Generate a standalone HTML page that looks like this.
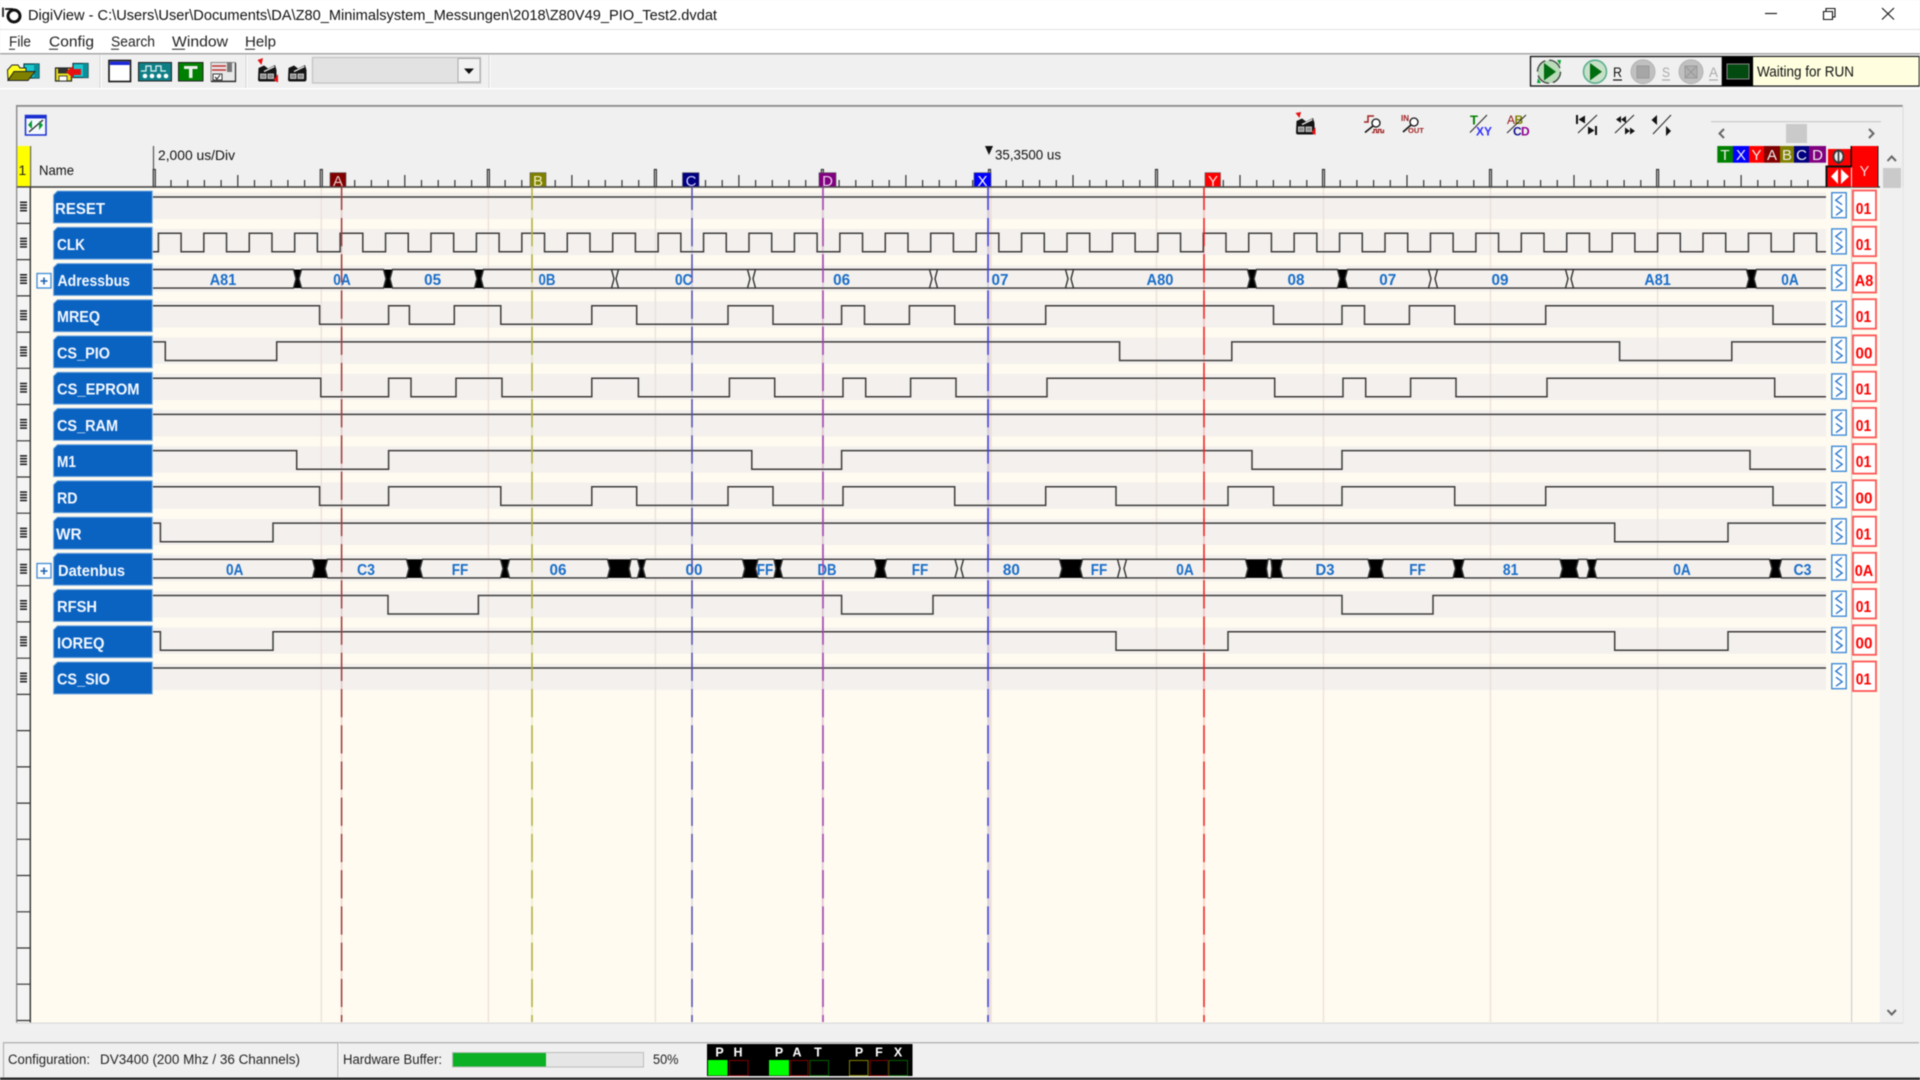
<!DOCTYPE html>
<html lang="de">
<head>
<meta charset="utf-8">
<title>DigiView</title>
<style>
html,body{margin:0;padding:0;width:1920px;height:1080px;overflow:hidden;background:#f0f0f0}
svg{display:block;filter:blur(.4px)}
text{font-family:"Liberation Sans",sans-serif;white-space:pre}
.t{font-size:14px;fill:#111}
.lb{font-size:15.5px;font-weight:bold;fill:#f4f8ff}
.bv{font-size:15.5px;font-weight:bold;fill:#1a6ec9;text-anchor:middle}
.val{font-size:15.5px;font-weight:bold;fill:#f00;text-anchor:middle}
.fl{font-size:15px;text-anchor:middle}
.w{fill:none;stroke:#3c3c3c;stroke-width:1.5}
.bus{fill:#f3f0ed;stroke:#333;stroke-width:1.4}
.st{font-size:12.5px;font-weight:bold;fill:#fff;text-anchor:middle}
</style>
</head>
<body>
<svg xmlns="http://www.w3.org/2000/svg" width="1920" height="1080" viewBox="0 0 1920 1080">
<defs>
<path id="lbl" d="M57.5 0H152.3V32H53.5V4Z" fill="#0b63c1" stroke="#7fb0e2" stroke-width="1"/>
<g id="chev"><rect x="1831.8" y="0" width="14.4" height="25" fill="#fff" stroke="#3f8bd8" stroke-width="1.4"/><path d="M1842 2.5L1835.8 7.5 1842 12M1836 13.5L1842.2 18 1836 22.5" fill="none" stroke="#2c78cc" stroke-width="1.4"/></g>
<rect id="vb" x="1853" y="0" width="23" height="29.5" fill="#fff" stroke="#ff5555" stroke-width="1.8"/>
<g id="hb" fill="#222"><rect x="20" y="-5.5" width="7" height="1.6"/><rect x="20" y="-2.7" width="7" height="1.6"/><rect x="20" y="0.1" width="7" height="1.6"/><rect x="20" y="2.9" width="7" height="1.6"/></g>
<g id="tk" fill="none" stroke="#333" stroke-width="1.2">
<path d="M16.7 187V180M33.4 187V180M50.1 187V180M66.8 187V180M83.5 187V175M100.2 187V180M116.9 187V180M133.6 187V180M150.3 187V180"/>
<rect x="-1" y="169.5" width="2" height="17.5" fill="#e8e8e8"/>
</g>
<g id="dev">
<path d="M1.5 6L7 3.5 11 6.5 18 3 19.5 8V17Q19.5 19.5 17.5 19.5H3Q1 19.5 1 17.5Z" fill="#141414"/>
<path d="M17.5 4.5L7 9.5" stroke="#e8e8e8" stroke-width="1.3"/>
<rect x="3.5" y="12" width="5.5" height="4.5" fill="#8c8c8c" stroke="#ddd" stroke-width=".8"/>
<rect x="11" y="12" width="5.5" height="4.5" fill="#8c8c8c" stroke="#ddd" stroke-width=".8"/>
</g>
</defs>

<!-- title bar -->
<rect width="1920" height="29" fill="#fff"/>
<rect y="29" width="1920" height="1" fill="#e2e2e2"/>
<path d="M3 7.5V17" stroke="#222" stroke-width="1.8"/>
<circle cx="14" cy="16" r="6" fill="#fff" stroke="#111" stroke-width="3"/>
<path d="M5 9H13" stroke="#111" stroke-width="1.8"/>
<text x="28" y="20" font-size="15" textLength="689" lengthAdjust="spacingAndGlyphs" fill="#111">DigiView - C:\Users\User\Documents\DA\Z80_Minimalsystem_Messungen\2018\Z80V49_PIO_Test2.dvdat</text>
<path d="M1765 13.5H1777" stroke="#111" stroke-width="1.1"/>
<path d="M1823.5 11.5H1832.5V19.5H1823.5ZM1826 11.5V8.5H1835V17H1832.5" fill="none" stroke="#111" stroke-width="1.1"/>
<path d="M1882 8L1894 19.5M1894 8L1882 19.5" stroke="#111" stroke-width="1.1"/>

<!-- menu -->
<rect y="30" width="1920" height="23" fill="#fff"/>
<g font-size="14.5" fill="#222">
<text x="9" y="46.5" textLength="22" lengthAdjust="spacingAndGlyphs">File</text>
<text x="49" y="46.5" textLength="45" lengthAdjust="spacingAndGlyphs">Config</text>
<text x="111" y="46.5" textLength="44" lengthAdjust="spacingAndGlyphs">Search</text>
<text x="172" y="46.5" textLength="56" lengthAdjust="spacingAndGlyphs">Window</text>
<text x="245" y="46.5" textLength="31" lengthAdjust="spacingAndGlyphs">Help</text>
</g>
<path d="M9 49.2H15M49 49.2H58M111 49.2H119M172 49.2H185M245 49.2H255" stroke="#222" stroke-width="1"/>

<!-- toolbar -->
<rect y="53" width="1920" height="1.6" fill="#a8a8a8"/>
<rect y="54.6" width="1920" height="33.4" fill="#f0f0f0"/>
<rect y="88" width="1920" height="1.4" fill="#fff"/>
<path d="M100 55V88M246 55V88M489 55V88" stroke="#d4d4d4" stroke-width="1"/>
<path d="M101 55V88M247 55V88M490 55V88" stroke="#fff" stroke-width="1"/>
<!-- open -->
<rect x="24" y="64" width="15" height="14" fill="#1cc6cf" stroke="#0a3a40" stroke-width="1.2"/>
<rect x="34" y="64" width="5" height="14" fill="#0b8f98"/>
<path d="M7.5 70L12 65H18L20 68H26V72H14L8 80Z" fill="#ffff20" stroke="#222" stroke-width="1"/>
<path d="M8 80.5L14 71.5H35L28 80.5Z" fill="#808000" stroke="#222" stroke-width="1"/>
<!-- save -->
<rect x="73" y="63.5" width="15" height="14" fill="#1cc6cf" stroke="#0a3a40" stroke-width="1.2"/>
<rect x="83" y="63.5" width="5" height="14" fill="#0b8f98"/>
<rect x="55.5" y="68" width="16" height="13" fill="#e8e020" stroke="#222" stroke-width="1.2"/>
<rect x="58" y="68.5" width="10" height="5" fill="#333"/>
<rect x="59" y="76" width="8" height="5" fill="#fff" stroke="#222" stroke-width=".8"/>
<path d="M66 72L73 66V69H81V75H73V78Z" fill="#e81010"/>
<!-- window -->
<rect x="109" y="60.5" width="21.5" height="21" fill="#fff" stroke="#111" stroke-width="1.6"/>
<rect x="110" y="61.5" width="19.5" height="3.5" fill="#1c28d8"/>
<!-- chip -->
<rect x="138.5" y="62.5" width="33" height="18.5" fill="#0f7f86" stroke="#222" stroke-width="1"/>
<path d="M141 71H146V66H151V71H156V66H161V71H166" fill="none" stroke="#e6f6f6" stroke-width="1.2"/>
<circle cx="145" cy="76" r="2.3" fill="#fff"/><circle cx="152" cy="76" r="2.3" fill="#fff"/><circle cx="159" cy="76" r="2.3" fill="#fff"/><circle cx="166" cy="76" r="2.3" fill="#fff"/>
<!-- T -->
<rect x="178.5" y="62.5" width="24.5" height="18.5" fill="#008000" stroke="#222" stroke-width="1"/>
<path d="M184 66H197.5V69H192.5V78H189V69H184Z" fill="#eee"/>
<!-- props -->
<rect x="211" y="62.5" width="24.5" height="18.5" fill="#e8e8e8" stroke="#888" stroke-width="1"/>
<path d="M212 66H226M212 70H226" stroke="#c03030" stroke-width="1.4"/>
<rect x="227" y="62" width="5" height="10" fill="#777"/>
<path d="M213 74H222V80H213Z" fill="#fff" stroke="#333"/>
<path d="M215 77L217 79 220 75" fill="none" stroke="#111"/>
<path d="M235.5 63V81.5H211" fill="none" stroke="#222" stroke-width="1.2"/>
<!-- devices -->
<use href="#dev" x="257" y="62"/>
<path d="M257.5 60L263 58 261.5 65ZM278 74L278 82.5 273.5 80Z" fill="#e81010"/>
<use href="#dev" x="287" y="62"/>
<!-- dropdown -->
<rect x="312.5" y="57.5" width="168" height="25.5" fill="#e2e2e2" stroke="#c8c8c8" stroke-width="1.5"/>
<rect x="458" y="58.5" width="22" height="23.5" fill="#f2f2f2" stroke="#aaa" stroke-width="1"/>
<path d="M464 68.5H474L469 74Z" fill="#111"/>

<!-- run panel -->
<rect x="1530.5" y="56.5" width="388.5" height="29.5" fill="#f0f0f0" stroke="#111" stroke-width="1.3"/>
<rect x="1721.7" y="57" width="31.5" height="29" fill="#000"/>
<rect x="1727" y="64" width="22" height="15" fill="#024a10" stroke="#888" stroke-width="1"/>
<rect x="1753.2" y="57" width="165.5" height="28.4" fill="#ffffe0"/>
<text x="1757" y="76.5" font-size="14.5" textLength="97" lengthAdjust="spacingAndGlyphs" fill="#111">Waiting for RUN</text>
<circle cx="1549" cy="71.7" r="11.5" fill="#b9dcb9" stroke="#444" stroke-width="1.4" stroke-dasharray="14 4"/>
<path d="M1544 63L1556 71.7 1544 80.5Z" fill="#006c10"/>
<path d="M1557 60L1561 60 1560 65ZM1541 83L1537 83 1538 78Z" fill="#00a030"/>
<circle cx="1595" cy="71.7" r="11.5" fill="#c8e0c8" stroke="#58b090" stroke-width="1.6"/>
<path d="M1590 63L1602 71.7 1590 80.5Z" fill="#006c10"/>
<text x="1613" y="77" font-size="14" textLength="9" lengthAdjust="spacingAndGlyphs" fill="#111">R</text>
<path d="M1613 80H1622" stroke="#111" stroke-width="1.2"/>
<circle cx="1643" cy="71.7" r="12" fill="#c0c0c0" stroke="#b4b4b4"/>
<rect x="1637" y="66" width="12" height="12" fill="#a6a6a6" stroke="#999"/>
<text x="1662" y="77" font-size="14" textLength="8" lengthAdjust="spacingAndGlyphs" fill="#aaa">S</text>
<path d="M1662 80H1670" stroke="#aaa" stroke-width="1.2"/>
<circle cx="1691" cy="71.7" r="12" fill="#c0c0c0" stroke="#b4b4b4"/>
<rect x="1685" y="66" width="12" height="12" fill="#b0b0b0" stroke="#999"/>
<path d="M1685 66L1697 78M1697 66L1685 78" stroke="#999" stroke-width="1.2"/>
<text x="1709" y="77" font-size="14" textLength="9" lengthAdjust="spacingAndGlyphs" fill="#aaa">A</text>
<path d="M1709 80H1718" stroke="#aaa" stroke-width="1.2"/>

<!-- panel frame -->
<rect x="16" y="105" width="1887" height="1.8" fill="#8a8a8a"/>
<rect x="1902.5" y="105" width="1" height="918" fill="#dcdcdc"/>
<rect x="16" y="106" width="1.4" height="917" fill="#8a8a8a"/>
<rect x="30.5" y="187" width="1849.5" height="835.5" fill="#fffbf0"/>
<rect x="16" y="1022.5" width="1887" height="1.2" fill="#dadada"/>

<!-- panel small icon -->
<rect x="25.5" y="115.5" width="20.5" height="19.5" fill="#f4f8ff" stroke="#1a2fd0" stroke-width="1.5"/>
<rect x="26" y="115.5" width="20" height="3" fill="#1a2fd0"/>
<path d="M29 132L43 120" stroke="#222" stroke-width="1.2"/>
<path d="M28 125L32 120V129ZM43 125L39 121V130Z" fill="#0a9a30"/>

<!-- header icons -->
<use href="#dev" x="1295" y="115"/>
<path d="M1295.5 113L1301 112 1299.5 118ZM1315.5 127L1315.5 135 1311.5 132.5Z" fill="#e81010"/>
<path d="M1364 122H1368V116H1374" fill="none" stroke="#a02020" stroke-width="1.5"/>
<circle cx="1376" cy="123" r="4" fill="#fff" stroke="#111" stroke-width="1.3"/>
<path d="M1373 126L1365 132.5" stroke="#111" stroke-width="1.6"/>
<path d="M1372 132.5H1374V129.5H1376.5V132.5H1378.5V129.5H1381V132.5H1383.5V129.5" fill="none" stroke="#a02020" stroke-width="1.2"/>
<text x="1401" y="121" font-size="8" font-weight="bold" fill="#a02020">IN</text>
<circle cx="1414" cy="122" r="4" fill="#fff" stroke="#111" stroke-width="1.3"/>
<path d="M1411 125L1403 132" stroke="#111" stroke-width="1.6"/>
<text x="1408" y="133" font-size="7.5" font-weight="bold" fill="#a02020">OUT</text>
<text x="1470" y="124.5" font-size="13" font-weight="bold" fill="#008000">T</text>
<path d="M1470 132.5L1487 115" stroke="#222" stroke-width="1"/>
<text x="1476" y="135.5" font-size="12" font-weight="bold" fill="#3030ff">XY</text>
<text x="1507" y="124" font-size="12" fill="#901818">A</text><text x="1514.5" y="124" font-size="12" font-weight="bold" fill="#808000">B</text>
<path d="M1507 133L1526 115" stroke="#222" stroke-width="1"/>
<text x="1513" y="135.5" font-size="12" font-weight="bold" fill="#101090">C</text><text x="1521" y="135.5" font-size="12" font-weight="bold" fill="#900090">D</text>
<g fill="#111">
<path d="M1576 115H1578V124H1576ZM1585 115.5V123.5L1578.5 119.5Z"/><path d="M1595 126H1597V135H1595ZM1588 126.5V134.5L1594.5 130.5Z"/>
<path d="M1621 116L1616 119.5 1621 123ZM1626 116L1621 119.5 1626 123ZM1625 127.5L1630 131 1625 134.5ZM1630 127.5L1635 131 1630 134.5Z"/>
<path d="M1657 115L1651.5 120 1657 125ZM1666 126L1671 131 1666 136Z"/>
</g>
<path d="M1578 133L1597 115M1615 133L1634 115M1653 134L1671 115" stroke="#222" stroke-width="1" fill="none"/>

<!-- horizontal scroller -->
<rect x="1711" y="121" width="170" height="1.4" fill="#cfcfcf"/>
<rect x="1786" y="124" width="21" height="19" fill="#cacaca"/>
<path d="M1724 129L1719.5 133.5 1724 138M1869 129L1873.5 133.5 1869 138" fill="none" stroke="#666" stroke-width="2"/>

<!-- header -->
<rect x="17.5" y="146" width="12.5" height="41" fill="#ffff00"/>
<text x="18.5" y="175" font-size="14" fill="#222">1</text>
<rect x="30" y="146" width="1.2" height="41" fill="#666"/>
<text x="39" y="175" class="t" textLength="35" lengthAdjust="spacingAndGlyphs">Name</text>
<path d="M153.5 146V187" stroke="#555" stroke-width="1.2"/>
<text x="158" y="160" class="t" textLength="77" lengthAdjust="spacingAndGlyphs">2,000 us/Div</text>
<path d="M985 146H993L989 155Z" fill="#111"/>
<text x="995" y="159.7" class="t" textLength="66" lengthAdjust="spacingAndGlyphs">35,3500 us</text>

<!-- ticks -->
<use href="#tk" x="154.3"/><use href="#tk" x="321.3"/><use href="#tk" x="488.4"/><use href="#tk" x="655.4"/><use href="#tk" x="822.4"/><use href="#tk" x="989.5"/><use href="#tk" x="1156.5"/><use href="#tk" x="1323.5"/><use href="#tk" x="1490.5"/><use href="#tk" x="1657.6"/>
<rect x="17" y="186.2" width="1863" height="1.6" fill="#444"/>

<!-- flags -->
<g>
<rect x="330" y="172.7" width="16" height="14" fill="#800000" stroke="#555" stroke-width=".6"/><text class="fl" x="338" y="186" fill="#e8c8c8">A</text>
<rect x="530" y="172.7" width="16" height="14" fill="#808000" stroke="#555" stroke-width=".6"/><text class="fl" x="538" y="186" fill="#f0f0c0">B</text>
<rect x="682.5" y="172.7" width="16.5" height="14" fill="#000080" stroke="#555" stroke-width=".6"/><text class="fl" x="691" y="186" fill="#d0d0ff">C</text>
<rect x="819" y="172.7" width="17" height="14" fill="#800080" stroke="#555" stroke-width=".6"/><text class="fl" x="827.5" y="186" fill="#eed0ee">D</text>
<rect x="974" y="172.7" width="17" height="14" fill="#0000ff" stroke="#555" stroke-width=".6"/><text class="fl" x="982.5" y="186" fill="#fff">X</text>
<rect x="1205" y="172.7" width="15.5" height="14" fill="#ff0000" stroke="#555" stroke-width=".6"/><text class="fl" x="1213" y="186" fill="#ffe0e0">Y</text>
</g>

<!-- letter buttons -->
<rect x="1717.3" y="146" width="15.7" height="16.7" fill="#008000"/>
<rect x="1733" y="146" width="16" height="16.7" fill="#0000ff"/>
<rect x="1749" y="146" width="15" height="16.7" fill="#ff0000"/>
<rect x="1764" y="146" width="16" height="16.7" fill="#800000"/>
<rect x="1780" y="146" width="14" height="16.7" fill="#808000"/>
<rect x="1794" y="146" width="15" height="16.7" fill="#000080"/>
<rect x="1809" y="146" width="17" height="16.7" fill="#800080"/>
<g fill="#eee" font-size="15" text-anchor="middle">
<text x="1725" y="160">T</text><text x="1741" y="160">X</text><text x="1756.5" y="160">Y</text><text x="1772" y="160">A</text><text x="1787" y="160">B</text><text x="1801.5" y="160">C</text><text x="1817.5" y="160">D</text>
</g>
<!-- red buttons -->
<rect x="1828" y="149" width="23" height="16.5" fill="#ff0000"/>
<ellipse cx="1838.5" cy="156.5" rx="5" ry="6" fill="#eee" stroke="#3a3a3a" stroke-width="2"/>
<path d="M1838.5 149.5V164" stroke="#333" stroke-width="1.6"/>
<rect x="1827" y="167" width="24" height="19.5" fill="#ff0000"/>
<path d="M1838 169V184L1831 176.5ZM1841 169V184L1849 176.5Z" fill="#fff"/>
<path d="M1826.5 187V166.5H1851.5V146" fill="none" stroke="#111" stroke-width="2"/>
<rect x="1852" y="146" width="26" height="41" fill="#ff0000"/>
<path d="M1878 146V187" stroke="#222" stroke-width="1"/>
<text x="1864.5" y="176" font-size="14.5" text-anchor="middle" fill="#ffdada">Y</text>

<!-- gutter -->
<rect x="17.4" y="187.8" width="12.8" height="834.7" fill="#f4f4f4"/>
<rect x="29.6" y="187" width="1.4" height="835.5" fill="#333"/>
<path d="M17 223.4H30M17 259.6H30M17 295.9H30M17 332.1H30M17 368.3H30M17 404.5H30M17 440.8H30M17 477H30M17 513.2H30M17 549.5H30M17 585.7H30M17 621.9H30M17 658.2H30M17 694.4H30M17 730.6H30M17 766.9H30M17 803.1H30M17 839.3H30M17 875.5H30M17 911.8H30M17 948H30M17 984.2H30M17 1020.5H30" stroke="#333" stroke-width="1.2"/>
<use href="#hb" y="207"/><use href="#hb" y="243.2"/><use href="#hb" y="279.5"/><use href="#hb" y="315.7"/><use href="#hb" y="351.9"/><use href="#hb" y="388.2"/><use href="#hb" y="424.4"/><use href="#hb" y="460.6"/><use href="#hb" y="496.8"/><use href="#hb" y="533.1"/><use href="#hb" y="569.3"/><use href="#hb" y="605.5"/><use href="#hb" y="641.8"/><use href="#hb" y="678"/>

<!-- stripes -->
<g fill="#f3f0ed">
<rect x="153" y="192.7" width="1673" height="26.3"/><rect x="153" y="228.9" width="1673" height="26.3"/><rect x="153" y="265.2" width="1673" height="26.3"/><rect x="153" y="301.4" width="1673" height="26.3"/><rect x="153" y="337.6" width="1673" height="26.3"/><rect x="153" y="373.9" width="1673" height="26.3"/><rect x="153" y="410.1" width="1673" height="26.3"/><rect x="153" y="446.3" width="1673" height="26.3"/><rect x="153" y="482.5" width="1673" height="26.3"/><rect x="153" y="518.8" width="1673" height="26.3"/><rect x="153" y="555" width="1673" height="26.3"/><rect x="153" y="591.2" width="1673" height="26.3"/><rect x="153" y="627.5" width="1673" height="26.3"/><rect x="153" y="663.7" width="1673" height="26.3"/>
</g>
<rect x="1851" y="187" width="1.2" height="835" fill="#d0d0d0"/>
<rect x="1880" y="187" width="23" height="835.5" fill="#f0f0f0"/>

<!-- vertical scroll -->
<path d="M1887.5 161L1891.7 156.5 1896 161M1887.5 1010L1891.7 1014.5 1896 1010" fill="none" stroke="#666" stroke-width="2"/>
<rect x="1883" y="168" width="18" height="20" fill="#cacaca"/>

<!-- grid -->
<path d="M321.3 188V1022M488.4 188V1022M655.4 188V1022M822.4 188V1022M1156.5 188V1022M1323.5 188V1022M1490.5 188V1022M1657.6 188V1022" stroke="#ebdfda" stroke-width="1.3"/>
<path d="M990 188V1022" stroke="#ebdfda" stroke-width="3.4"/>

<!-- labels -->
<use href="#lbl" y="191"/><use href="#lbl" y="227.2"/><use href="#lbl" y="263.5"/><use href="#lbl" y="299.7"/><use href="#lbl" y="335.9"/><use href="#lbl" y="372.2"/><use href="#lbl" y="408.4"/><use href="#lbl" y="444.6"/><use href="#lbl" y="480.8"/><use href="#lbl" y="517.1"/><use href="#lbl" y="553.3"/><use href="#lbl" y="589.5"/><use href="#lbl" y="625.8"/><use href="#lbl" y="662"/>
<text class="lb" x="55" y="214" textLength="50" lengthAdjust="spacingAndGlyphs">RESET</text>
<text class="lb" x="57" y="250" textLength="28" lengthAdjust="spacingAndGlyphs">CLK</text>
<text class="lb" x="57.5" y="286" textLength="72.5" lengthAdjust="spacingAndGlyphs">Adressbus</text>
<text class="lb" x="57" y="322" textLength="43" lengthAdjust="spacingAndGlyphs">MREQ</text>
<text class="lb" x="57" y="358.4" textLength="53" lengthAdjust="spacingAndGlyphs">CS_PIO</text>
<text class="lb" x="57" y="394.7" textLength="82.5" lengthAdjust="spacingAndGlyphs">CS_EPROM</text>
<text class="lb" x="57" y="431" textLength="61" lengthAdjust="spacingAndGlyphs">CS_RAM</text>
<text class="lb" x="57" y="467.2" textLength="19" lengthAdjust="spacingAndGlyphs">M1</text>
<text class="lb" x="57" y="503.4" textLength="20.5" lengthAdjust="spacingAndGlyphs">RD</text>
<text class="lb" x="56" y="539.7" textLength="25.5" lengthAdjust="spacingAndGlyphs">WR</text>
<text class="lb" x="58" y="575.9" textLength="67" lengthAdjust="spacingAndGlyphs">Datenbus</text>
<text class="lb" x="57" y="612" textLength="40" lengthAdjust="spacingAndGlyphs">RFSH</text>
<text class="lb" x="57" y="648.4" textLength="47.5" lengthAdjust="spacingAndGlyphs">IOREQ</text>
<text class="lb" x="57" y="684.6" textLength="53" lengthAdjust="spacingAndGlyphs">CS_SIO</text>
<g>
<rect x="37" y="273.5" width="14" height="14.5" fill="#fff" stroke="#3f8bd8" stroke-width="1.3"/><path d="M40.5 281H47.5M44 277.5V284.5" stroke="#1a5fb0" stroke-width="1.6"/>
<rect x="37" y="563.5" width="14" height="14.5" fill="#fff" stroke="#3f8bd8" stroke-width="1.3"/><path d="M40.5 571H47.5M44 567.5V574.5" stroke="#1a5fb0" stroke-width="1.6"/>
</g>

<!-- waves -->
<path class="w" d="M153 197H1826"/>
<path class="w" d="M153 251.7H158.4
v-18.5h22.7v18.5h22.73 v-18.5h22.7v18.5h22.73 v-18.5h22.7v18.5h22.73 v-18.5h22.7v18.5h22.73 v-18.5h22.7v18.5h22.73 v-18.5h22.7v18.5h22.73
v-18.5h22.7v18.5h22.73 v-18.5h22.7v18.5h22.73 v-18.5h22.7v18.5h22.73 v-18.5h22.7v18.5h22.73 v-18.5h22.7v18.5h22.73 v-18.5h22.7v18.5h22.73
v-18.5h22.7v18.5h22.73 v-18.5h22.7v18.5h22.73 v-18.5h22.7v18.5h22.73 v-18.5h22.7v18.5h22.73 v-18.5h22.7v18.5h22.73 v-18.5h22.7v18.5h22.73
v-18.5h22.7v18.5h22.73 v-18.5h22.7v18.5h22.73 v-18.5h22.7v18.5h22.73 v-18.5h22.7v18.5h22.73 v-18.5h22.7v18.5h22.73 v-18.5h22.7v18.5h22.73
v-18.5h22.7v18.5h22.73 v-18.5h22.7v18.5h22.73 v-18.5h22.7v18.5h22.73 v-18.5h22.7v18.5h22.73 v-18.5h22.7v18.5h22.73 v-18.5h22.7v18.5h22.73
v-18.5h22.7v18.5h22.73 v-18.5h22.7v18.5h22.73 v-18.5h22.7v18.5h22.73 v-18.5h22.7v18.5h22.73 v-18.5h22.7v18.5h22.73 v-18.5h22.7v18.5h22.73
v-18.5h22.7v18.5H1826"/>
<path class="w" d="M153 305.7H319.6V324.3H388.6V305.7H409.4V324.3H454.3V305.7H500.8V324.3H591.8V305.7H636.7V324.3H728V305.7H773V324.3H841.6V305.7H864.5V324.3H909.4V305.7H954.7V324.3H1045.7V305.7H1273.5V324.3H1342V305.7H1364.5V324.3H1409.4V305.7H1454.7V324.3H1545.7V305.7H1773V324.3H1826"/>
<path class="w" d="M153 341.9H165.3V360.5H276.7V341.9H1119.6V360.5H1231.8V341.9H1619.6V360.5H1731.8V341.9H1826"/>
<path class="w" d="M153 378.2H320.8V396.8H388.6V378.2H411V396.8H456V378.2H502V396.8H591.8V378.2H638.4V396.8H729.4V378.2H774.7V396.8H843V378.2H865.7V396.8H910.6V378.2H956V396.8H1047V378.2H1274.7V396.8H1343V378.2H1365.7V396.8H1410.6V378.2H1456V396.8H1547V378.2H1774.7V396.8H1826"/>
<path class="w" d="M153 414.4H1826"/>
<path class="w" d="M153 450.6H296.7V469.2H388.6V450.6H751.8V469.2H841.6V450.6H1252V469.2H1342V450.6H1750V469.2H1826"/>
<path class="w" d="M153 486.8H319.6V505.4H388.6V486.8H500.8V505.4H591.8V486.8H636.7V505.4H728V486.8H773V505.4H843V486.8H954.7V505.4H1045.7V486.8H1116V505.4H1228V486.8H1273.5V505.4H1342V486.8H1454.7V505.4H1545.7V486.8H1773V505.4H1826"/>
<path class="w" d="M153 523.1H160.4V541.7H273V523.1H1614.7V541.7H1728V523.1H1826"/>
<path class="w" d="M153 595.5H388V614H478.4V595.5H841.6V614H933V595.5H1342V614H1433V595.5H1826"/>
<path class="w" d="M153 631.8H160.4V650.3H273V631.8H1116V650.3H1228V631.8H1614.7V650.3H1728V631.8H1826"/>
<path class="w" d="M153 668H1826"/>

<!-- address bus -->
<g transform="translate(0,269.5)">
<g fill="#000"><rect x="293.5" width="8" height="18.6"/><rect x="383.5" width="9" height="18.6"/><rect x="474.5" width="9" height="18.6"/><rect x="1247.5" width="9" height="18.6"/><rect x="1337.5" width="10" height="18.6"/><rect x="1746.5" width="10" height="18.6"/></g>
<path d="M611.5 0H618.5M611.5 18.6H618.5M747.5 0H755.5M747.5 18.6H755.5M929.5 0H937.5M929.5 18.6H937.5M1065.5 0H1073.5M1065.5 18.6H1073.5M1428.5 0H1437.5M1428.5 18.6H1437.5M1565.5 0H1573.5M1565.5 18.6H1573.5" stroke="#333" stroke-width="1.4"/>
<path class="bus" d="M153 0H293.5L296 9.3 293.5 18.6H153"/>
<path class="bus" d="M301.5 0H383.5L386 9.3 383.5 18.6H301.5L299 9.3Z"/>
<path class="bus" d="M392.5 0H474.5L477 9.3 474.5 18.6H392.5L390 9.3Z"/>
<path class="bus" d="M483.5 0H611.5L614 9.3 611.5 18.6H483.5L481 9.3Z"/>
<path class="bus" d="M618.5 0H747.5L750 9.3 747.5 18.6H618.5L616 9.3Z"/>
<path class="bus" d="M755.5 0H929.5L932 9.3 929.5 18.6H755.5L753 9.3Z"/>
<path class="bus" d="M937.5 0H1065.5L1068 9.3 1065.5 18.6H937.5L935 9.3Z"/>
<path class="bus" d="M1073.5 0H1247.5L1250 9.3 1247.5 18.6H1073.5L1071 9.3Z"/>
<path class="bus" d="M1256.5 0H1337.5L1340 9.3 1337.5 18.6H1256.5L1254 9.3Z"/>
<path class="bus" d="M1347.5 0H1428.5L1431 9.3 1428.5 18.6H1347.5L1345 9.3Z"/>
<path class="bus" d="M1437.5 0H1565.5L1568 9.3 1565.5 18.6H1437.5L1435 9.3Z"/>
<path class="bus" d="M1573.5 0H1746.5L1749 9.3 1746.5 18.6H1573.5L1571 9.3Z"/>
<path class="bus" d="M1826 0H1756.5L1754 9.3 1756.5 18.6H1826"/>
</g>
<g>
<text class="bv" x="223" y="285" textLength="26.5" lengthAdjust="spacingAndGlyphs">A81</text><text class="bv" x="342" y="285" textLength="17.5" lengthAdjust="spacingAndGlyphs">0A</text><text class="bv" x="432.6" y="285" textLength="17" lengthAdjust="spacingAndGlyphs">05</text><text class="bv" x="547" y="285" textLength="17" lengthAdjust="spacingAndGlyphs">0B</text><text class="bv" x="683.7" y="285" textLength="17.5" lengthAdjust="spacingAndGlyphs">0C</text><text class="bv" x="841.6" y="285" textLength="17" lengthAdjust="spacingAndGlyphs">06</text><text class="bv" x="1000" y="285" textLength="17" lengthAdjust="spacingAndGlyphs">07</text><text class="bv" x="1160" y="285" textLength="27" lengthAdjust="spacingAndGlyphs">A80</text><text class="bv" x="1296" y="285" textLength="17" lengthAdjust="spacingAndGlyphs">08</text><text class="bv" x="1387.8" y="285" textLength="17" lengthAdjust="spacingAndGlyphs">07</text><text class="bv" x="1500" y="285" textLength="17" lengthAdjust="spacingAndGlyphs">09</text><text class="bv" x="1657.6" y="285" textLength="26.5" lengthAdjust="spacingAndGlyphs">A81</text><text class="bv" x="1790" y="285" textLength="17.5" lengthAdjust="spacingAndGlyphs">0A</text>
</g>

<!-- data bus -->
<g transform="translate(0,559.3)">
<g fill="#000"><rect x="312.5" width="15" height="18.6"/><rect x="406.5" width="16" height="18.6"/><rect x="500.5" width="9" height="18.6"/><rect x="607.5" width="24" height="18.6"/><rect x="637.5" width="8" height="18.6"/><rect x="742.5" width="15.5" height="18.6"/><rect x="774" width="8" height="18.6"/><rect x="874.5" width="12" height="18.6"/><rect x="1059.5" width="23" height="18.6"/><rect x="1245.5" width="23.5" height="18.6"/><rect x="1270" width="12.5" height="18.6"/><rect x="1368" width="15.5" height="18.6"/><rect x="1453" width="11" height="18.6"/><rect x="1560" width="18.5" height="18.6"/><rect x="1587" width="9.5" height="18.6"/><rect x="1769.5" width="12" height="18.6"/></g>
<path d="M955 0H963.5M955 18.6H963.5M1117.5 0H1126.5M1117.5 18.6H1126.5" stroke="#333" stroke-width="1.4"/>
<path class="bus" d="M153 0H312.5L315 9.3 312.5 18.6H153"/>
<path class="bus" d="M327.5 0H406.5L409 9.3 406.5 18.6H327.5L325 9.3Z"/>
<path class="bus" d="M422.5 0H500.5L503 9.3 500.5 18.6H422.5L420 9.3Z"/>
<path class="bus" d="M509.5 0H607.5L610 9.3 607.5 18.6H509.5L507 9.3Z"/>
<path class="bus" d="M631 0H637.5L640 9.3 637.5 18.6H631L629 9.3Z"/>
<path class="bus" d="M645.5 0H742.5L745 9.3 742.5 18.6H645.5L643 9.3Z"/>
<path class="bus" d="M758 0H774L776 9.3 774 18.6H758L755.5 9.3Z"/>
<path class="bus" d="M782.5 0H874.5L877 9.3 874.5 18.6H782.5L780 9.3Z"/>
<path class="bus" d="M886.5 0H955L957.5 9.3 955 18.6H886.5L884 9.3Z"/>
<path class="bus" d="M963.5 0H1059.5L1062 9.3 1059.5 18.6H963.5L961 9.3Z"/>
<path class="bus" d="M1082.5 0H1117.5L1120 9.3 1117.5 18.6H1082.5L1080 9.3Z"/>
<path class="bus" d="M1126.5 0H1245.5L1248 9.3 1245.5 18.6H1126.5L1124 9.3Z"/>
<path class="bus" d="M1268 0H1271L1272 9.3 1271 18.6H1268L1266.5 9.3Z"/>
<path class="bus" d="M1282.5 0H1368L1370.5 9.3 1368 18.6H1282.5L1280 9.3Z"/>
<path class="bus" d="M1383.5 0H1453L1455.5 9.3 1453 18.6H1383.5L1381 9.3Z"/>
<path class="bus" d="M1464 0H1560L1562.5 9.3 1560 18.6H1464L1461.5 9.3Z"/>
<path class="bus" d="M1578.5 0H1587L1589.5 9.3 1587 18.6H1578.5L1576 9.3Z"/>
<path class="bus" d="M1596.5 0H1769.5L1772 9.3 1769.5 18.6H1596.5L1594 9.3Z"/>
<path class="bus" d="M1826 0H1781.5L1779 9.3 1781.5 18.6H1826"/>
</g>
<g>
<text class="bv" x="234.7" y="575" textLength="17.5" lengthAdjust="spacingAndGlyphs">0A</text><text class="bv" x="366" y="575" textLength="18" lengthAdjust="spacingAndGlyphs">C3</text><text class="bv" x="460" y="575" textLength="16.5" lengthAdjust="spacingAndGlyphs">FF</text><text class="bv" x="558" y="575" textLength="17" lengthAdjust="spacingAndGlyphs">06</text><text class="bv" x="694" y="575" textLength="17" lengthAdjust="spacingAndGlyphs">00</text><text class="bv" x="765" y="575" textLength="16.5" lengthAdjust="spacingAndGlyphs">FF</text><text class="bv" x="827" y="575" textLength="19" lengthAdjust="spacingAndGlyphs">DB</text><text class="bv" x="920" y="575" textLength="16.5" lengthAdjust="spacingAndGlyphs">FF</text><text class="bv" x="1011.4" y="575" textLength="17" lengthAdjust="spacingAndGlyphs">80</text><text class="bv" x="1099" y="575" textLength="16.5" lengthAdjust="spacingAndGlyphs">FF</text><text class="bv" x="1185" y="575" textLength="17.5" lengthAdjust="spacingAndGlyphs">0A</text><text class="bv" x="1325" y="575" textLength="19" lengthAdjust="spacingAndGlyphs">D3</text><text class="bv" x="1417.5" y="575" textLength="16.5" lengthAdjust="spacingAndGlyphs">FF</text><text class="bv" x="1510.6" y="575" textLength="15.5" lengthAdjust="spacingAndGlyphs">81</text><text class="bv" x="1682" y="575" textLength="17.5" lengthAdjust="spacingAndGlyphs">0A</text><text class="bv" x="1802.5" y="575" textLength="18" lengthAdjust="spacingAndGlyphs">C3</text>
</g>

<!-- cursors -->
<g stroke-width="1.5" fill="none">
<path d="M341.6 187V1022" stroke="#a44" stroke-opacity=".22"/>
<path d="M341.6 187V1022" stroke="#a33a3a" stroke-dasharray="28.23 8" stroke-dashoffset="5.23"/>
<path d="M532 187V1022" stroke="#b0b040" stroke-opacity=".22"/>
<path d="M532 187V1022" stroke="#b0b040" stroke-dasharray="28.23 8" stroke-dashoffset="5.23"/>
<path d="M692 187V1022" stroke="#5050b0" stroke-opacity=".22"/>
<path d="M692 187V1022" stroke="#5050b0" stroke-dasharray="28.23 8" stroke-dashoffset="5.23"/>
<path d="M823 187V1022" stroke="#a040b0" stroke-opacity=".22"/>
<path d="M823 187V1022" stroke="#a040b0" stroke-dasharray="28.23 8" stroke-dashoffset="5.23"/>
<path d="M988 187V1022" stroke="#4040e0" stroke-opacity=".22"/>
<path d="M988 187V1022" stroke="#4040e0" stroke-dasharray="28.23 8" stroke-dashoffset="5.23"/>
<path d="M1204 187V1022" stroke="#f00" stroke-opacity=".22"/>
<path d="M1204 187V1022" stroke="#f02020" stroke-dasharray="28.23 8" stroke-dashoffset="5.23"/>
</g>

<!-- right side -->
<use href="#chev" y="192.7"/><use href="#chev" y="228.9"/><use href="#chev" y="265.2"/><use href="#chev" y="301.4"/><use href="#chev" y="337.6"/><use href="#chev" y="373.9"/><use href="#chev" y="410.1"/><use href="#chev" y="446.3"/><use href="#chev" y="482.5"/><use href="#chev" y="518.8"/><use href="#chev" y="555"/><use href="#chev" y="591.2"/><use href="#chev" y="627.5"/><use href="#chev" y="663.7"/>
<use href="#vb" y="190.5"/><use href="#vb" y="226.7"/><use href="#vb" y="263"/><use href="#vb" y="299.2"/><use href="#vb" y="335.4"/><use href="#vb" y="371.7"/><use href="#vb" y="407.9"/><use href="#vb" y="444.1"/><use href="#vb" y="480.3"/><use href="#vb" y="516.6"/><use href="#vb" y="552.8"/><use href="#vb" y="589"/><use href="#vb" y="625.3"/><use href="#vb" y="661.5"/>
<text class="val" x="1863.5" y="214" textLength="15.5" lengthAdjust="spacingAndGlyphs">01</text><text class="val" x="1863.5" y="250" textLength="15.5" lengthAdjust="spacingAndGlyphs">01</text><text class="val" x="1864" y="286" textLength="18.5" lengthAdjust="spacingAndGlyphs">A8</text><text class="val" x="1863.5" y="322" textLength="15.5" lengthAdjust="spacingAndGlyphs">01</text><text class="val" x="1864" y="358.4" textLength="17" lengthAdjust="spacingAndGlyphs">00</text><text class="val" x="1863.5" y="394.7" textLength="15.5" lengthAdjust="spacingAndGlyphs">01</text><text class="val" x="1863.5" y="431" textLength="15.5" lengthAdjust="spacingAndGlyphs">01</text><text class="val" x="1863.5" y="467.2" textLength="15.5" lengthAdjust="spacingAndGlyphs">01</text><text class="val" x="1864" y="503.4" textLength="17" lengthAdjust="spacingAndGlyphs">00</text><text class="val" x="1863.5" y="539.7" textLength="15.5" lengthAdjust="spacingAndGlyphs">01</text><text class="val" x="1864" y="576" textLength="18.5" lengthAdjust="spacingAndGlyphs">0A</text><text class="val" x="1863.5" y="612" textLength="15.5" lengthAdjust="spacingAndGlyphs">01</text><text class="val" x="1864" y="648.4" textLength="17" lengthAdjust="spacingAndGlyphs">00</text><text class="val" x="1863.5" y="684.6" textLength="15.5" lengthAdjust="spacingAndGlyphs">01</text>

<!-- status bar -->
<rect x="3" y="1042" width="1916" height="1.4" fill="#b4b4b4"/>
<path d="M3.5 1042V1077M338 1042V1077" stroke="#b4b4b4" stroke-width="1.2"/>
<path d="M339 1043V1077" stroke="#fff" stroke-width="1"/>
<g font-size="13.5" fill="#222">
<text x="8" y="1064" textLength="82" lengthAdjust="spacingAndGlyphs">Configuration:</text>
<text x="100" y="1064" textLength="200" lengthAdjust="spacingAndGlyphs">DV3400 (200 Mhz / 36 Channels)</text>
<text x="343" y="1064" textLength="99" lengthAdjust="spacingAndGlyphs">Hardware Buffer:</text>
<text x="653" y="1064" textLength="25.5" lengthAdjust="spacingAndGlyphs">50%</text>
</g>
<rect x="452.5" y="1052.5" width="191" height="14.5" fill="#e6e6e6" stroke="#bcbcbc" stroke-width="1"/>
<rect x="453" y="1053" width="93" height="13.5" fill="#0bb025"/>
<rect x="707" y="1044" width="205.5" height="32" fill="#000"/>
<g>
<text class="st" x="719.5" y="1056.5">P</text><text class="st" x="738" y="1056.5">H</text><text class="st" x="779" y="1056.5">P</text><text class="st" x="797" y="1056.5">A</text><text class="st" x="818" y="1056.5">T</text><text class="st" x="859" y="1056.5">P</text><text class="st" x="879" y="1056.5">F</text><text class="st" x="898" y="1056.5">X</text>
</g>
<rect x="708" y="1060" width="19.5" height="15.5" fill="#00ff00"/>
<rect x="729.5" y="1060.5" width="18.5" height="15" fill="#000" stroke="#800000"/>
<rect x="769" y="1060" width="20" height="15.5" fill="#00ff00"/>
<rect x="790.5" y="1060.5" width="17.5" height="15" fill="#000" stroke="#800000"/>
<rect x="810" y="1060.5" width="18.5" height="15" fill="#000" stroke="#006000"/>
<rect x="849.5" y="1060.5" width="18.5" height="15" fill="#000" stroke="#808000"/>
<rect x="870" y="1060.5" width="18" height="15" fill="#000" stroke="#800000"/>
<rect x="889" y="1060.5" width="18.5" height="15" fill="#000" stroke="#006000"/>
<rect y="1077.5" width="1920" height="2.5" fill="#2a2a2a"/>
</svg>
</body>
</html>
